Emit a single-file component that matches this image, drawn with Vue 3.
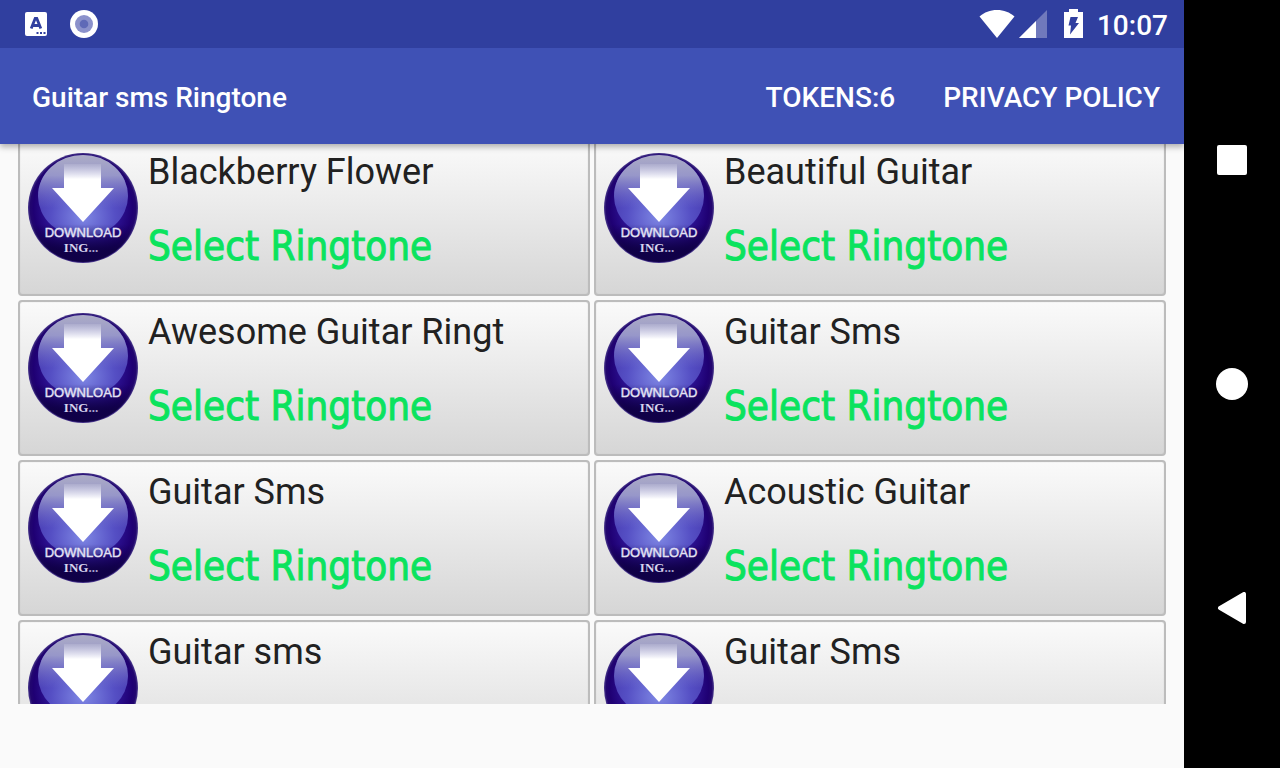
<template>
    <div class="screen">
        <div class="app">
            <div class="status-bar">
                <div class="status-left">
                    <svg width="24" height="28" viewBox="0 0 24 28">
                        <rect x="1" y="2" width="22" height="24" rx="2" fill="#fff" />
                        <path d="M7.200 18.500L11.200 8.500h1.600l4 10M8.800 15.500h6.400" fill="none" stroke="#303f9f" stroke-width="2.800" />
                        <path d="M12.500 22h2v2h-2zM16 22h2v2h-2zM19.500 22h2v2h-2z" fill="#303f9f" />
                    </svg>
                    <svg width="28" height="28" viewBox="0 0 28 28">
                        <circle cx="14" cy="14" r="14" fill="#fff" />
                        <circle cx="14" cy="14" r="9" fill="#8b91cb" />
                        <circle cx="14" cy="14" r="4.300" fill="#5f69b7" />
                    </svg>
                </div>
                <div class="status-right">
                    <svg width="36" height="28" viewBox="0 0 36 28">
                        <path d="M0.500 6.500C5.500 2.200 11 0 18 0s12.500 2.200 17.500 6.500L18 28z" fill="#fff" />
                    </svg>
                    <svg class="signal" width="28" height="28" viewBox="0 0 28 28">
                        <path d="M28 0v28H0z" fill="#7079bc" />
                        <path d="M17 11v17H0z" fill="#fff" />
                    </svg>
                    <svg class="battery" width="19" height="30" viewBox="0 0 19 30">
                        <path d="M5 0h9v3h5v26H0V3h5z" fill="#fff" />
                        <path d="M6.500 8h7.500l-2.500 6H15L6 25.500l1-9H4.500z" fill="#303f9f" />
                    </svg>
                    <span class="clock">10:07</span>
                </div>
            </div>
            <header class="toolbar">
                <h1>Guitar sms Ringtone</h1>
                <button type="button" class="action">TOKENS:{{ tokens }}</button>
                <button type="button" class="action">PRIVACY POLICY</button>
            </header>
            <main class="list">
                <div class="grid">
                    <button v-for="(ringtone, index) in ringtones" :key="index" type="button" class="card">
                        <svg class="ball" width="110" height="110" viewBox="0 0 110 110">
                            <defs>
                                <radialGradient :id="`ball${index}`" cx="0.5" cy="0.5" r="0.5">
                                    <stop offset="0.6" stop-color="#2f1699" />
                                    <stop offset="0.9" stop-color="#1f0073" />
                                    <stop offset="0.96" stop-color="#22066f" />
                                    <stop offset="1" stop-color="#4a3a8c" />
                                </radialGradient>
                                <radialGradient :id="`glow${index}`" cx="0.5" cy="0.75" r="0.65">
                                    <stop offset="0" stop-color="#7f88e4" />
                                    <stop offset="0.55" stop-color="#554fc4" />
                                    <stop offset="1" stop-color="#4334ab" />
                                </radialGradient>
                                <linearGradient :id="`shine${index}`" x1="0" y1="0" x2="0" y2="1">
                                    <stop offset="0" stop-color="#adadc6" />
                                    <stop offset="0.25" stop-color="#a0a1cc" stop-opacity="0.9" />
                                    <stop offset="0.65" stop-color="#7f80d6" stop-opacity="0" />
                                </linearGradient>
                                <linearGradient :id="`shade${index}`" x1="0" y1="0" x2="0" y2="1">
                                    <stop offset="0.65" stop-color="#0d0040" stop-opacity="0" />
                                    <stop offset="0.88" stop-color="#0d0040" stop-opacity="0.85" />
                                </linearGradient>
                                <linearGradient :id="`arrow${index}`" x1="0" y1="0" x2="0" y2="1">
                                    <stop offset="0" stop-color="#fff" stop-opacity="0.1" />
                                    <stop offset="0.26" stop-color="#fff" />
                                </linearGradient>
                            </defs>
                            <circle cx="55" cy="55" r="55" :fill="`url(#ball${index})`" />
                            <ellipse cx="55" cy="43" rx="45" ry="41" :fill="`url(#glow${index})`" />
                            <ellipse cx="55" cy="43" rx="45" ry="41" :fill="`url(#shine${index})`" />
                            <circle cx="55" cy="55" r="54" :fill="`url(#shade${index})`" />
                            <path d="M36 11h37v24h13L55 69 24 35h12z" :fill="`url(#arrow${index})`" />
                            <text x="55" y="84" class="ball-label">DOWNLOAD</text>
                            <text x="53" y="99" class="ball-note">ING<tspan class="dots">...</tspan></text>
                        </svg>
                        <span class="info">
                            <span class="title">{{ ringtone }}</span>
                            <span class="select">Select Ringtone</span>
                        </span>
                    </button>
                </div>
            </main>
        </div>
        <nav class="nav-bar">
            <button type="button" aria-label="Recent apps">
                <svg width="32" height="32" viewBox="0 0 32 32"><rect x="1" y="1" width="30" height="30" rx="2" fill="#fff" /></svg>
            </button>
            <button type="button" aria-label="Home">
                <svg width="32" height="32" viewBox="0 0 32 32"><circle cx="16" cy="16" r="16" fill="#fff" /></svg>
            </button>
            <button type="button" aria-label="Back">
                <svg width="32" height="32" viewBox="0 0 32 32">
                    <path d="M4 16L28 2v28z" fill="#fff" stroke="#fff" stroke-width="4" stroke-linejoin="round" />
                </svg>
            </button>
        </nav>
    </div>
</template>

<script setup>
import { ref } from 'vue';

    const tokens = ref(6);

    const ringtones = ref([
        'Blackberry Flower',
        'Beautiful Guitar',
        'Awesome Guitar Ringt',
        'Guitar Sms',
        'Guitar Sms',
        'Acoustic Guitar',
        'Guitar sms',
        'Guitar Sms'
    ]);
</script>

<style>
    body {
        margin: 0;
    }
</style>

<style scoped>
    .screen {
        display: flex;
        height: 100vh;
        overflow: hidden;
        background: #fafafa;
        font-family: Roboto, sans-serif;
    }
    button {
        margin: 0;
        padding: 0;
        border: 0;
        background: none;
        font-family: inherit;
        cursor: pointer;
    }
    svg {
        display: block;
        flex: none;
    }
    .app {
        flex: 1;
        min-width: 0;
        display: flex;
        flex-direction: column;
    }

    .status-bar {
        position: relative;
        z-index: 2;
        display: flex;
        justify-content: space-between;
        height: 48px;
        padding: 0 16px 0 24px;
        background: #303f9f;
    }
    .status-left,
    .status-right {
        display: flex;
        align-items: center;
    }
    .status-left {
        gap: 22px;
    }
    .signal {
        margin-left: 4px;
    }
    .battery {
        margin: 0 14px 0 17px;
    }
    .clock {
        padding-top: 4px;
        color: #fff;
        font-size: 28px;
        font-weight: 500;
        line-height: 36px;
    }

    .toolbar {
        position: relative;
        z-index: 1;
        display: flex;
        align-items: center;
        gap: 48px;
        box-sizing: border-box;
        height: 96px;
        padding: 4px 24px 0 32px;
        background: #3f51b5;
        box-shadow: 0 3px 6px rgba(0, 0, 0, 0.3);
    }
    h1,
    .action {
        color: #fff;
        font-size: 28px;
        font-weight: 500;
        line-height: 36px;
    }
    h1 {
        flex: 1;
        margin: 0;
    }

    .list {
        flex: 1;
        min-height: 0;
        margin-bottom: 64px;
        overflow: hidden;
    }
    .grid {
        display: grid;
        grid-template-columns: 1fr 1fr;
        gap: 4px;
        margin: -4px 18px 0;
    }
    .card {
        display: flex;
        align-items: flex-start;
        gap: 10px;
        min-width: 0;
        height: 156px;
        padding: 8px;
        border: 2px solid #bcbcbc;
        border-radius: 4px;
        background: linear-gradient(#fafafa, #d6d6d6);
        box-shadow: inset 0 0 1px #bcbcbc;
        text-align: left;
    }
    .ball {
        margin-top: 3px;
    }
    .ball-label {
        fill: #e4e2f4;
        stroke: #e4e2f4;
        stroke-width: 0.4px;
        font: 13px "Liberation Sans", sans-serif;
        text-anchor: middle;
    }
    .ball-note {
        fill: #d8d4ee;
        font: bold 13px "Liberation Serif", serif;
        text-anchor: middle;
    }
    .dots {
        fill: #a9a3cf;
    }
    .info {
        display: flex;
        flex-direction: column;
        gap: 28px;
        min-width: 0;
    }
    .title {
        color: #212121;
        font-size: 36px;
        line-height: 44px;
        white-space: nowrap;
    }
    .select {
        color: #0be35e;
        font-family: "DejaVu Sans Condensed", "DejaVu Sans", sans-serif;
        font-size: 40px;
        line-height: 48px;
        white-space: nowrap;
        -webkit-text-stroke: 1px #0be35e;
    }

    .nav-bar {
        display: flex;
        flex-direction: column;
        align-items: center;
        justify-content: space-between;
        box-sizing: border-box;
        width: 96px;
        padding: 48px 0;
        background: #000;
    }
    .nav-bar button {
        display: flex;
        align-items: center;
        justify-content: center;
        width: 96px;
        height: 224px;
    }
</style>
